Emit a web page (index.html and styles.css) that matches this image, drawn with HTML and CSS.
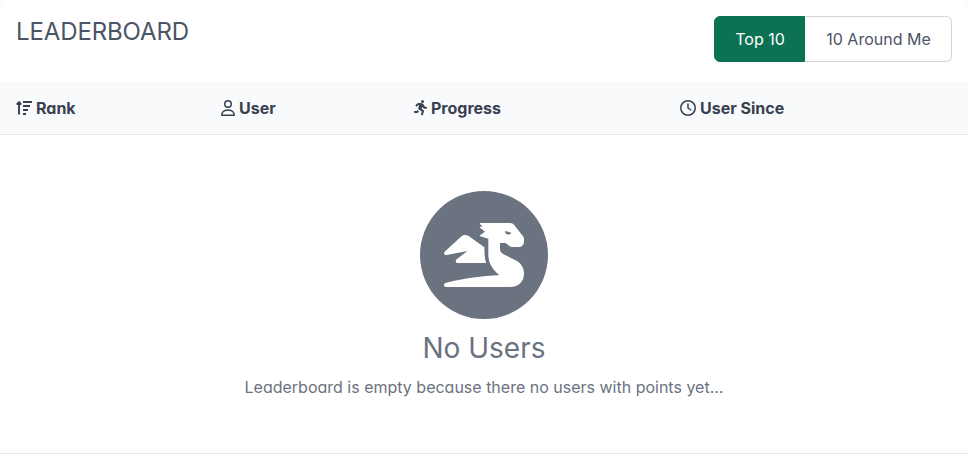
FILE: index.html
```html
<!DOCTYPE html>
<html lang="en">
<head>
<meta charset="utf-8">
<title>Leaderboard</title>
<link rel="stylesheet" href="styles.css">
</head>
<body>
<main class="card">
  <header class="card-header">
    <h1 class="title">LEADERBOARD</h1>
    <div class="toggle">
      <button class="option active">Top 10</button><button class="option">10 Around Me</button>
    </div>
  </header>
  <div class="columns">
    <div class="column"><svg class="icon" viewBox="0 0 16 16"><path d="M3 14.500V2M.7 4.600L3 2.100l2.300 2.500M7 2h9M7 6h7M7 10h5M7 14h3" fill="none" stroke="currentColor" stroke-width="1.900"/></svg>Rank</div>
    <div class="column"><svg class="icon user" viewBox="0 0 448 512"><path d="M304 128a80 80 0 1 0-160 0 80 80 0 1 0 160 0zm-208 0a128 128 0 1 1 256 0 128 128 0 1 1-256 0zM49.300 464h349.400c-8.900-63.300-63.300-112-129-112h-91.400c-65.700 0-120.100 48.700-129 112zM0 482.300C0 383.800 79.800 304 178.300 304h91.400c98.500 0 178.300 79.800 178.300 178.300 0 16.400-13.300 29.700-29.700 29.700H29.700C13.300 512 0 498.700 0 482.300z"/></svg>User</div>
    <div class="column"><svg class="icon runner" viewBox="0 0 448 512"><path d="M320 48a48 48 0 1 0-96 0 48 48 0 1 0 96 0zM125.700 175.500c9.900-9.900 23.400-15.500 37.500-15.500 1.900 0 3.800.1 5.600.3l-31.200 82.200c-9.300 27.900 2.400 58.200 27.500 72.900l84.700 49.400-24.700 86.400c-4.900 17 5 34.700 22 39.600s34.700-5 39.600-22l31-108.800c4-14.100-2-29.100-14.600-36.500l-60.300-35.500 31.100-77.800 15.100 34.200c9.900 19.400 29.800 31.600 51.500 31.600H384c17.700 0 32-14.300 32-32s-14.300-32-32-32h-38.300l-23.700-47.300C300 124 258 96 207.500 96h-44.300c-31 0-60.800 12.300-82.700 34.300l-23.200 23.100c-12.500 12.500-12.500 32.800 0 45.300s32.800 12.500 45.300 0zM91.200 352H32c-17.700 0-32 14.300-32 32s14.300 32 32 32h69.600c19 0 36.200-11.200 43.900-28.500l12.800-28.700-9.500-5.700c-17.500-10.300-31.300-24.900-40.500-41.800z"/></svg>Progress</div>
    <div class="column"><svg class="icon" viewBox="0 0 16 16"><circle cx="8" cy="8" r="7.250" fill="none" stroke="currentColor" stroke-width="1.500"/><path d="M8 3.900V8l2.700 1.800" fill="none" stroke="currentColor" stroke-width="1.500" stroke-linecap="round" stroke-linejoin="round"/></svg>User Since</div>
  </div>
  <section class="empty">
    <div class="badge">
      <svg class="dragon" viewBox="0 0 240 192"><path fill-rule="evenodd" d="M108 0h91q7 0 11 5l27 35q3 4 3 9v7c0 9-7 16-16 16h-14c-12 0-16-4-21-9l-4-3h-17v18c0 9 5 12 11 16l40 20c14 9 21 22 21 38 0 24-18 40-42 40H7c-10 0-10-11 0-13 55-14 107-19 159-23-20-16-33-36-33-61V47l-24-7c-2-1-2-3 0-4l14-10-15-12c-2-1-1-3 1-3h7L108 3zM184 24v5c3 7 15 7 18 0z"/><path d="M121 73L74 39C66 35 58 35 50 42L2 86c-4 5-1 11 6 10l62-12-32 25c-5 4-3 11 3 11h85c-4-14-5-32-5-47z"/></svg>
    </div>
    <h2 class="empty-title">No Users</h2>
    <p class="empty-text">Leaderboard is empty because there no users with points yet...</p>
  </section>
</main>
</body>
</html>
```

FILE: styles.css
```css
* { box-sizing: border-box; }
body {
  margin: 0;
  background: #f9fafb;
  color: #4b5563;
  font: 400 16px/24px Inter, sans-serif;
  font-feature-settings: "cv02", "cv03", "cv04", "cv11";
}
.card { height: 474px; background: #fff; border-radius: 6px; overflow: hidden; }
.card-header {
  display: flex;
  justify-content: space-between;
  align-items: flex-start;
  height: 82px;
  padding: 16px;
}
.title { margin: 0; font-size: 24px; line-height: 31px; font-weight: 400; letter-spacing: -0.12px; }
.toggle { display: flex; height: 46px; }
.option {
  width: 147px;
  padding: 0 0 0 1px;
  border: 1px solid #d1d5db;
  border-left: 0;
  border-radius: 0 6px 6px 0;
  background: #fff;
  color: #4b5563;
  font: inherit;
  font-feature-settings: inherit;
}
.option.active {
  width: 91px;
  border: 1px solid #0b7253;
  border-radius: 6px 0 0 6px;
  background: #0b7253;
  color: #fff;
}
.columns {
  display: grid;
  grid-template-columns: 205px 193px 266px 1fr;
  align-items: center;
  height: 53px;
  padding-left: 16px;
  background: #f9fafb;
  border-bottom: 1px solid #e5e7eb;
  color: #374151;
  font-weight: 700;
}
.column { display: flex; align-items: center; gap: 4px; }
.icon { width: 16px; height: 16px; fill: currentColor; }
.icon.user { width: 14px; }
.icon.runner { width: 14px; margin-right: -1px; }
.empty {
  display: flex;
  flex-direction: column;
  align-items: center;
  height: 319px;
  padding-top: 56px;
  border-bottom: 1px solid #e5e7eb;
  color: #6b7280;
}
.badge {
  display: grid;
  place-items: center;
  width: 128px;
  height: 128px;
  border-radius: 50%;
  background: #6b7280;
}
.dragon { width: 80px; height: 64px; fill: #fff; }
.empty-title { margin: 11px 0 0; font-size: 28px; line-height: 36px; font-weight: 400; }
.empty-text { margin: 9px 0 0; }
```
